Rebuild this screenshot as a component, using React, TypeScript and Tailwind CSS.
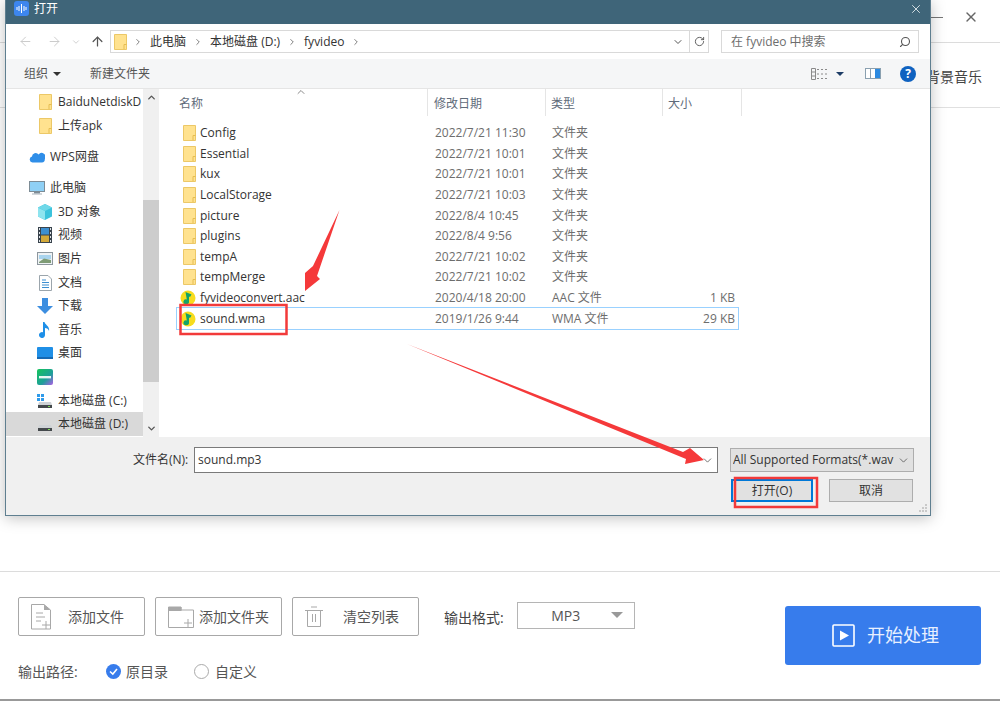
import React from "react";
import { ArrowLeft, ArrowRight, ArrowUp, ChevronDown, ChevronRight, ChevronUp, RotateCw, Search, X } from "lucide-react";

const CJK = "font-['Open_Sans','Noto_Sans_CJK_SC',sans-serif]";

function Folder({ className = "" }: { className?: string }) {
  return (
    <svg viewBox="0 0 13 16" className={`h-[16px] w-[13px] shrink-0 ${className}`}>
      <path d="M0.5 0.5H12.5V15.5H0.5Z" fill="#ffe28f" stroke="#ecc867" />
      <path d="M10 15V10.5H12.5" fill="none" stroke="#e6bd52" />
    </svg>
  );
}

function MusicFile() {
  return (
    <svg viewBox="0 0 16 16" className="h-[16px] w-[16px] shrink-0">
      <circle cx="8" cy="8" r="7.5" fill="#f7dc1e" />
      <path d="M5.5 2L11.5 4.5L10 7L9 6.4V11.5A2.8 2.4 0 1 1 6.8 9.4Z" fill="#11a36a" />
    </svg>
  );
}

function DiskIcon({ windows }: { windows?: boolean }) {
  return (
    <svg viewBox="0 0 16 16" className="h-[16px] w-[16px] shrink-0">
      {windows && <path d="M0 1H3V4H0ZM4 1H7V4H4ZM0 5H3V8H0ZM4 5H7V8H4Z" fill="#2f9bea" />}
      <path d="M2 9H14L15 12H1Z" fill="#cfd3d6" />
      <rect x="1" y="12" width="14" height="3" fill="#44494c" />
      <rect x="11" y="13" width="2" height="1" fill="#7bdc54" />
    </svg>
  );
}

const sideIcons: Record<string, React.ReactNode> = {
  cloud: (
    <svg viewBox="0 0 16 12" className="h-[12px] w-[16px] shrink-0">
      <path d="M3.5 11.5A3 3 0 0 1 3 5.6A3.6 3.6 0 0 1 9.6 3.6A3.8 3.8 0 0 1 15.8 8A3 3 0 0 1 13 11.5Z" fill="#2f8ee8" />
    </svg>
  ),
  pc: (
    <svg viewBox="0 0 16 14" className="h-[14px] w-[16px] shrink-0">
      <rect x="0.5" y="0.5" width="15" height="10" fill="#8fd0f5" stroke="#7d8c96" />
      <rect x="5" y="11" width="6" height="1.5" fill="#7d8c96" />
      <rect x="3" y="12.5" width="10" height="1" fill="#a8b2b9" />
    </svg>
  ),
  cube: (
    <svg viewBox="0 0 16 16" className="h-[16px] w-[16px] shrink-0">
      <path d="M8 0L15 3.5V12.5L8 16L1 12.5V3.5Z" fill="#3cc3dc" />
      <path d="M1 3.5L8 7V16L1 12.5Z" fill="#8ee4ef" />
      <path d="M8 0L15 3.5L8 7L1 3.5Z" fill="#6fd8e8" />
    </svg>
  ),
  video: (
    <svg viewBox="0 0 14 16" className="h-[16px] w-[14px] shrink-0">
      <rect width="14" height="16" fill="#39434c" />
      <rect x="3" y="1" width="8" height="6.5" fill="#3d8fd0" />
      <rect x="3" y="8.5" width="8" height="6.5" fill="#d3a93a" />
      <path d="M1 1H2V3H1ZM1 5H2V7H1ZM1 9H2V11H1ZM1 13H2V15H1ZM12 1H13V3H12ZM12 5H13V7H12ZM12 9H13V11H12ZM12 13H13V15H12Z" fill="#dfe4e8" />
    </svg>
  ),
  image: (
    <svg viewBox="0 0 16 13" className="h-[13px] w-[16px] shrink-0">
      <rect x="0.5" y="0.5" width="15" height="12" fill="#eef2f4" stroke="#8d979e" />
      <rect x="2" y="3" width="12" height="4" fill="#a9d4ee" />
      <path d="M2 10L7 6.5L14 8V11H2Z" fill="#7f9c76" />
    </svg>
  ),
  doc: (
    <svg viewBox="0 0 13 16" className="h-[16px] w-[13px] shrink-0">
      <path d="M0.5 0.5H9L12.5 4V15.5H0.5Z" fill="#fff" stroke="#9ba5ac" />
      <path d="M3 5H7M3 7.5H10M3 10H10M3 12.5H10" stroke="#3d8fd0" />
    </svg>
  ),
  download: (
    <svg viewBox="0 0 16 16" className="h-[16px] w-[16px] shrink-0">
      <path d="M5 0H11V8H16L8 16L0 8H5Z" fill="#3c8ee0" />
    </svg>
  ),
  music: (
    <svg viewBox="0 0 12 16" className="h-[16px] w-[12px] shrink-0">
      <path d="M4 0H5.5C6 3 11 4 10 9C9.6 7 7.8 6 6 6V13A3 3 0 1 1 4 10.2Z" fill="#1d8fe8" />
    </svg>
  ),
  desktop: (
    <svg viewBox="0 0 16 12" className="h-[12px] w-[16px] shrink-0">
      <rect width="16" height="12" rx="1" fill="#1f8fe6" />
      <rect y="10" width="16" height="2" fill="#1569b3" />
    </svg>
  ),
  iqiyi: (
    <svg viewBox="0 0 16 16" className="h-[16px] w-[16px] shrink-0">
      <defs>
        <linearGradient id="iq" x1="0" y1="0" x2="1" y2="1">
          <stop offset="0" stopColor="#15c45a" />
          <stop offset="0.6" stopColor="#1e9f9a" />
          <stop offset="1" stopColor="#b05ce8" />
        </linearGradient>
      </defs>
      <rect width="16" height="16" rx="2" fill="url(#iq)" />
      <rect x="2" y="7" width="12" height="2.4" fill="#fff" opacity="0.9" />
    </svg>
  ),
};

const sideRows = [
  { name: "BaiduNetdiskD", icon: "folder", indent: "pl-[31px]", h: "h-[24px]" },
  { name: "上传apk", icon: "folder", indent: "pl-[31px]", h: "h-[24px] mb-[7px]" },
  { name: "WPS网盘", icon: "cloud", indent: "pl-[23px]", h: "h-[24px] mb-[7px]" },
  { name: "此电脑", icon: "pc", indent: "pl-[23px]", h: "h-[24px]" },
  { name: "3D 对象", icon: "cube", indent: "pl-[31px]", h: "h-[23.6px]" },
  { name: "视频", icon: "video", indent: "pl-[31px]", h: "h-[23.6px]" },
  { name: "图片", icon: "image", indent: "pl-[31px]", h: "h-[23.6px]" },
  { name: "文档", icon: "doc", indent: "pl-[31px]", h: "h-[23.6px]" },
  { name: "下载", icon: "download", indent: "pl-[31px]", h: "h-[23.6px]" },
  { name: "音乐", icon: "music", indent: "pl-[31px]", h: "h-[23.6px]" },
  { name: "桌面", icon: "desktop", indent: "pl-[31px]", h: "h-[23.6px]" },
  { name: "", icon: "iqiyi", indent: "pl-[31px]", h: "h-[23.6px]" },
  { name: "本地磁盘 (C:)", icon: "diskC", indent: "pl-[31px]", h: "h-[23.6px]" },
  { name: "本地磁盘 (D:)", icon: "diskD", indent: "pl-[31px]", h: "h-[23.6px] bg-[#d9d9d9]" },
];

const files = [
  { name: "Config", date: "2022/7/21 11:30", type: "文件夹", size: "" },
  { name: "Essential", date: "2022/7/21 10:01", type: "文件夹", size: "" },
  { name: "kux", date: "2022/7/21 10:01", type: "文件夹", size: "" },
  { name: "LocalStorage", date: "2022/7/21 10:03", type: "文件夹", size: "" },
  { name: "picture", date: "2022/8/4 10:45", type: "文件夹", size: "" },
  { name: "plugins", date: "2022/8/4 9:56", type: "文件夹", size: "" },
  { name: "tempA", date: "2022/7/21 10:02", type: "文件夹", size: "" },
  { name: "tempMerge", date: "2022/7/21 10:02", type: "文件夹", size: "" },
  { name: "fyvideoconvert.aac", date: "2020/4/18 20:00", type: "AAC 文件", size: "1 KB" },
  { name: "sound.wma", date: "2019/1/26 9:44", type: "WMA 文件", size: "29 KB" },
];

function SideIcon({ icon }: { icon: string }) {
  if (icon === "folder") return <Folder />;
  if (icon === "diskC") return <DiskIcon windows />;
  if (icon === "diskD") return <DiskIcon />;
  return <>{sideIcons[icon]}</>;
}

function FileDialog() {
  return (
    <div className="absolute left-[5px] top-0 flex h-[516px] w-[926px] flex-col border border-t-0 border-[#5f7f90] bg-white shadow-[0_2px_14px_rgba(0,0,0,0.25)]">
      {/* title bar */}
      <div className="flex h-[24px] shrink-0 items-center bg-[#3f6579] pb-[7px] pl-[8px] pr-[7px] text-[12px] text-white">
        <div className="flex h-[15px] w-[15px] items-center justify-center rounded-[3px] bg-[#3d86ee]">
          <svg viewBox="0 0 11 9" className="h-[9px] w-[11px]">
            <path d="M1 3V6M3 2V7M5.5 0V9M8 2V7M10 3V6" stroke="#fff" strokeWidth="1" />
          </svg>
        </div>
        <span className="ml-[5px]">打开</span>
        <X className="ml-auto h-[14px] w-[14px] text-[#e6edf0]" strokeWidth={1.5} />
      </div>

      {/* address row */}
      <div className="flex h-[35px] shrink-0 items-center pl-[12px] pr-[11px] text-[12px] text-[#333]">
        <ArrowLeft className="h-[15px] w-[15px] text-[#c9c9c9]" strokeWidth={1.5} />
        <ArrowRight className="ml-[14px] h-[15px] w-[15px] text-[#c9c9c9]" strokeWidth={1.5} />
        <ChevronDown className="ml-[9px] h-[10px] w-[10px] text-[#c9c9c9]" />
        <ArrowUp className="ml-[9px] h-[15px] w-[15px] text-[#555]" strokeWidth={2} />
        <div className="ml-[5px] flex h-[23px] w-[599px] items-center border border-[#d9d9d9] pl-[3px]">
          <Folder />
          <ChevronRight className="ml-[6px] h-[10px] w-[10px] text-[#666]" />
          <span className="ml-[7px]">此电脑</span>
          <ChevronRight className="ml-[7px] h-[10px] w-[10px] text-[#666]" />
          <span className="ml-[7px]">本地磁盘 (D:)</span>
          <ChevronRight className="ml-[7px] h-[10px] w-[10px] text-[#666]" />
          <span className="ml-[7px]">fyvideo</span>
          <ChevronRight className="ml-[7px] h-[10px] w-[10px] text-[#666]" />
          <ChevronDown className="ml-auto mr-[5px] h-[12px] w-[12px] text-[#555]" />
          <div className="flex h-full w-[19px] items-center justify-center border-l border-[#d9d9d9]">
            <RotateCw className="h-[11px] w-[11px] text-[#555]" />
          </div>
        </div>
        <div className="ml-[12px] flex h-[23px] flex-1 items-center border border-[#d9d9d9] pl-[9px] pr-[7px] text-[#6d6d6d]">
          <span>在 fyvideo 中搜索</span>
          <Search className="ml-auto h-[12px] w-[12px] -scale-x-100 text-[#555]" strokeWidth={2.2} />
        </div>
      </div>

      {/* command bar */}
      <div className="flex h-[30px] shrink-0 items-center border-b border-[#e5e5e5] bg-[#f5f6f7] pl-[18px] pr-[14px] text-[12px] text-[#555]">
        <span>组织</span>
        <span className="ml-[5px] border-x-[4px] border-t-[4px] border-x-transparent border-t-[#333]" />
        <span className="ml-[29px]">新建文件夹</span>
        <svg viewBox="0 0 16 12" className="ml-auto h-[12px] w-[16px]">
          <path d="M0.5 0.5H4.5V11.5H0.5ZM6 1.5H8M10 1.5H12M14 1.5H16M6 6H8M10 6H12M14 6H16M6 10.5H8M10 10.5H12M14 10.5H16M0.5 4H4.5M0.5 8H4.5" stroke="#8a8a8a" fill="none" />
        </svg>
        <span className="ml-[9px] border-x-[4px] border-t-[4px] border-x-transparent border-t-[#1d3c66]" />
        <svg viewBox="0 0 16 11" className="ml-[21px] h-[11px] w-[16px]">
          <rect x="0.5" y="0.5" width="15" height="10" fill="#fff" stroke="#8aa0b0" />
          <rect x="10" y="1" width="5" height="9" fill="#2d8ae0" />
          <rect x="5" y="1" width="1" height="9" fill="#8aa0b0" />
        </svg>
        <div className="ml-[19px] flex h-[16px] w-[16px] items-center justify-center rounded-full bg-[#0f62c0] text-[12px] font-bold leading-none text-white">
          ?
        </div>
      </div>

      {/* navigation + list */}
      <div className="flex min-h-0 flex-1">
        <div className="flex w-[153px] shrink-0">
          <div className="w-[137px] shrink-0 pt-[1px] text-[12px] text-[#333]">
            {sideRows.map((row) => (
              <div key={row.icon + row.name} className={`flex items-center gap-[5px] ${row.indent} ${row.h}`}>
                <div className="flex w-[16px] justify-center">
                  <SideIcon icon={row.icon} />
                </div>
                <span className="whitespace-nowrap">{row.name}</span>
              </div>
            ))}
          </div>
          <div className="flex w-[16px] shrink-0 flex-col items-center bg-[#f0f0f0]">
            <div className="flex h-[17px] items-center">
              <ChevronUp className="h-[11px] w-[11px] text-[#555]" strokeWidth={3} />
            </div>
            <div className="mt-[94px] h-[182px] w-full bg-[#cdcdcd]" />
            <div className="mt-auto flex h-[17px] items-center">
              <ChevronDown className="h-[11px] w-[11px] text-[#555]" strokeWidth={3} />
            </div>
          </div>
        </div>

        <div className="relative min-w-0 flex-1 pl-[18px] text-[12px]">
          <div className="flex h-[27px] text-[#5f6b7a]">
            <div className="flex w-[251px] items-center border-r border-[#e5e5e5] pl-[2px] pt-[2px]">名称</div>
            <div className="flex w-[118px] items-center border-r border-[#e5e5e5] pl-[6px] pt-[2px]">修改日期</div>
            <div className="flex w-[117px] items-center border-r border-[#e5e5e5] pl-[5px] pt-[2px]">类型</div>
            <div className="flex w-[79px] items-center border-r border-[#e5e5e5] pl-[5px] pt-[2px]">大小</div>
          </div>
          <ChevronUp className="absolute left-[136px] top-[-3px] h-[12px] w-[12px] text-[#8a8a8a]" />
          <div className="mt-[7px]">
            {files.map((f) => (
              <div
                key={f.name}
                className={`flex h-[20.6px] w-[561px] items-center ${f.name === "sound.wma" ? "outline outline-[#99d1ff]" : ""}`}
              >
                <div className="flex w-[252px] items-center pl-[3px] text-[#333]">
                  {f.size ? <MusicFile /> : <Folder className="ml-[3px]" />}
                  <span className="ml-[4px]">{f.name}</span>
                </div>
                <div className="w-[117px] pl-[6px] text-[#6d6d6d]">{f.date}</div>
                <div className="w-[80px] pl-[6px] text-[#6d6d6d]">{f.type}</div>
                <div className="w-[112px] pr-[3px] text-right text-[#6d6d6d]">{f.size}</div>
              </div>
            ))}
          </div>
        </div>
      </div>

      {/* footer */}
      <div className="relative h-[78px] shrink-0 bg-[#f0f0f0] text-[12px] text-[#333]">
        <div className="flex items-center pt-[10px]">
          <span className="ml-[127px] w-[61px]">文件名(N):</span>
          <div className="flex h-[26px] w-[524px] items-center border border-[#7a7a7a] bg-white pl-[3px] pr-[3px]">
            <span>sound.mp3</span>
            <ChevronDown className="ml-auto h-[13px] w-[13px] text-[#555]" strokeWidth={1.5} />
          </div>
          <div className="ml-[12px] flex h-[24px] w-[184px] items-center border border-[#adadad] bg-[#e1e1e1] pl-[2px] pr-[3px]">
            <span className="w-[161px] overflow-hidden whitespace-nowrap">All Supported Formats(*.wav</span>
            <ChevronDown className="ml-auto h-[13px] w-[13px] text-[#555]" strokeWidth={1.5} />
          </div>
        </div>
        <div className="mt-[6px] flex justify-end pr-[17px]">
          <div className="flex h-[23px] w-[82px] items-center justify-center border-2 border-[#0078d7] bg-[#e1e1e1]">打开(O)</div>
          <div className="ml-[16px] flex h-[23px] w-[84px] items-center justify-center border border-[#adadad] bg-[#e1e1e1]">取消</div>
        </div>
        <svg viewBox="0 0 10 10" className="absolute bottom-[2px] right-[2px] h-[10px] w-[10px]">
          <path d="M7 1H9V3H7ZM4 4H6V6H4ZM7 4H9V6H7ZM1 7H3V9H1ZM4 7H6V9H4ZM7 7H9V9H7Z" fill="#c9c9c9" />
        </svg>
      </div>
    </div>
  );
}

function ToolButton({ label, icon, justify }: { label: string; icon: React.ReactNode; justify: string }) {
  return (
    <div className={`flex h-[39px] w-[127px] items-center rounded-[2px] border border-[#a8a8a8] text-[14px] text-[#555] ${justify}`}>
      {icon}
      <span>{label}</span>
    </div>
  );
}

export default function App() {
  return (
    <div className={`relative flex h-[701px] w-[1000px] flex-col overflow-hidden bg-white ${CJK}`}>
      {/* app behind the dialog */}
      <div className="flex h-[43px] shrink-0 items-center justify-end border-b border-[#dcdcdc] pb-[8px] pr-[21px] text-[#666]">
        <div className="mr-[20px] h-[1px] w-[12px] bg-[#777]" />
        <X className="h-[16px] w-[16px]" strokeWidth={2} />
      </div>
      <div className="flex h-[65px] shrink-0 items-center justify-end border-b border-[#e0e0e0] pt-[2px] pr-[18px] text-[14px] text-[#444]">
        背景音乐
      </div>
      <div className="flex-1" />

      <div className="h-[128px] shrink-0 border-t border-[#dcdcdc] pl-[18px] pr-[19px] pt-[25px]">
        <div className="flex items-start">
          <div className="flex gap-[10px]">
            <ToolButton
              label="添加文件"
              justify="pl-[12px] gap-[17px]"
              icon={
                <svg viewBox="0 0 20 27" className="h-[27px] w-[20px]">
                  <path d="M0.5 1.5H13L19.5 7V26H0.5Z" fill="#fff" stroke="#a8a8a8" />
                  <path d="M13 1.5V7H19.5" fill="#a8a8a8" />
                  <path d="M5 10H12M5 14H14M5 18H10" stroke="#a8a8a8" />
                  <path d="M11 22H19M15 18V26" stroke="#a8a8a8" />
                </svg>
              }
            />
            <ToolButton
              label="添加文件夹"
              justify="pl-[12px] gap-[5px]"
              icon={
                <svg viewBox="0 0 26 22" className="h-[22px] w-[26px]">
                  <path d="M0.5 1H13V4H25.5V21.5H0.5Z" fill="#fff" stroke="#a8a8a8" />
                  <rect x="0.5" y="1" width="13" height="4" fill="#a8a8a8" />
                  <path d="M16 17H24M20 13V21" stroke="#a8a8a8" />
                </svg>
              }
            />
            <ToolButton
              label="清空列表"
              justify="pl-[12px] gap-[20px]"
              icon={
                <svg viewBox="0 0 18 21" className="h-[21px] w-[18px]">
                  <path d="M0 4.5H18M6 1H12" stroke="#a8a8a8" />
                  <path d="M2.5 4.5V20.5H15.5V4.5" fill="none" stroke="#a8a8a8" />
                  <path d="M7.5 8V16M10.5 8V16" stroke="#a8a8a8" />
                </svg>
              }
            />
          </div>
          <span className="ml-[25px] mt-[10px] text-[14px] text-[#444]">输出格式:</span>
          <div className="relative ml-[13px] mt-[5px] flex h-[27px] w-[118px] items-center justify-center border border-[#b5b5b5] pr-[20px] text-[14px] text-[#555]">
            MP3
            <span className="absolute right-[11px] top-[9px] border-x-[6px] border-t-[6px] border-x-transparent border-t-[#999]" />
          </div>
          <div className="ml-auto mt-[9px] flex h-[59px] w-[196px] items-center gap-[12px] rounded-[3px] bg-[#377cec] pl-[47px] text-[18px] text-[#e8f0ff]">
            <svg viewBox="0 0 23 23" className="h-[23px] w-[23px]">
              <rect x="1" y="1" width="21" height="21" rx="1" fill="none" stroke="#fff" strokeWidth="1.6" />
              <path d="M8 6.5L17 11.5L8 16.5Z" fill="#fff" />
            </svg>
            开始处理
          </div>
        </div>
        <div className="-mt-[4px] flex items-center text-[14px] text-[#555]">
          <span className="w-[88px]">输出路径:</span>
          <svg viewBox="0 0 15 15" className="h-[15px] w-[15px]">
            <circle cx="7.5" cy="7.5" r="7.5" fill="#377cec" />
            <path d="M4 7.5L6.8 10L11 5" fill="none" stroke="#fff" strokeWidth="1.6" />
          </svg>
          <span className="ml-[5px]">原目录</span>
          <div className="ml-[26px] h-[15px] w-[15px] rounded-full border border-[#aaa]" />
          <span className="ml-[6px]">自定义</span>
        </div>
      </div>
      <div className="h-[2px] shrink-0 bg-[#999]" />

      <FileDialog />

      {/* red annotations drawn on top of the screenshot */}
      <svg viewBox="0 0 1000 701" className="pointer-events-none absolute inset-0 h-[701px] w-[1000px]">
        <path d="M339.5 210L313 266L305 273L305 291L320 279L317 276Z" fill="#f5393a" />
        <path d="M407 344L683 452L690 448L704 460L685 464L686 459Z" fill="#f5393a" />
        <rect x="180.5" y="305" width="106" height="29" fill="none" stroke="#f23a3a" strokeWidth="2.5" />
        <rect x="735" y="478" width="82" height="29" fill="none" stroke="#f23a3a" strokeWidth="2.5" />
      </svg>
    </div>
  );
}
